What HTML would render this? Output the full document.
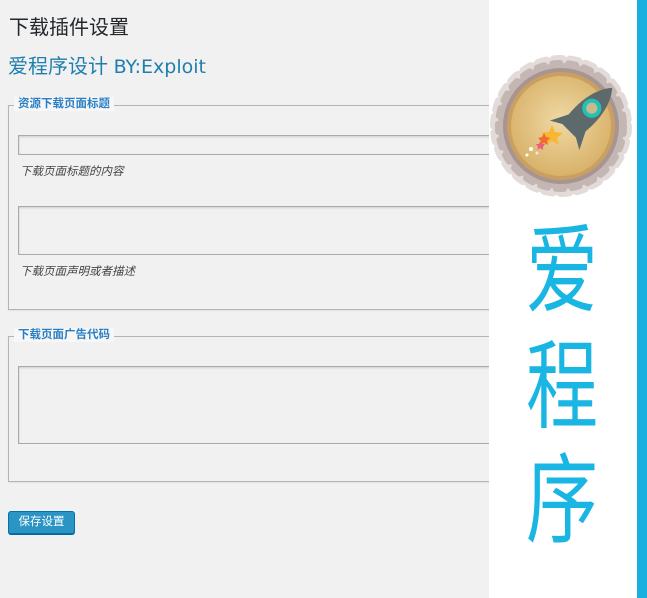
<!DOCTYPE html>
<html><head><meta charset="utf-8"><style>
*{box-sizing:border-box;margin:0;padding:0}
body{width:647px;height:598px;overflow:hidden;background:#f1f1f1;font-family:"Liberation Sans","Noto Sans CJK SC",sans-serif;position:relative}
.a{position:absolute}
h1{position:absolute;left:9px;top:11px;font-size:20px;font-weight:normal;color:#23282d}
h2{position:absolute;left:8px;top:50px;font-size:20px;font-weight:normal;color:#1e7fae}
.fs{position:absolute;left:8px;border:1px solid #b4b4b4;box-shadow:0 1px 1px rgba(0,0,0,.06)}
.lg{position:absolute;background:#f7f7f7;color:#2a7fc4;font-size:11.5px;font-weight:bold;padding:0 4px;height:14px;line-height:14px}
.in{position:absolute;left:18px;border:1px solid #aaa;box-shadow:inset 0 1px 2px rgba(0,0,0,.15);background:#f1f1f1}
.cap{position:absolute;left:20px;font-size:11.5px;font-style:italic;color:#444}
.panel{position:absolute;left:489px;top:0;width:148px;height:598px;background:#fff}
.bar{position:absolute;left:637px;top:0;width:10px;height:598px;background:#19b0e0}
.big{position:absolute;left:520px;width:84px;text-align:center;color:#19b5e3;font-size:72px;font-family:"Noto Sans CJK SC",sans-serif;font-weight:400;transform:scaleY(1.35);transform-origin:top;line-height:72px}
.btn{position:absolute;left:8px;top:511px;width:67px;height:23px;background:#2a95c5;border:1px solid #0073aa;border-radius:3px;color:#fff;font-size:11.5px;text-align:center;line-height:21px;box-shadow:0 1px 0 #006799}
</style></head><body>
<h1>下载插件设置</h1>
<h2>爱程序设计 <span style="font-family:'DejaVu Sans','Liberation Sans',sans-serif;font-size:19px">BY:Exploit</span></h2>

<div class="fs" style="top:105px;width:500px;height:205px"></div>
<div class="lg" style="left:14px;top:97px">资源下载页面标题</div>
<div class="in" style="top:135px;width:480px;height:20px"></div>
<div class="cap" style="top:163px">下载页面标题的内容</div>
<div class="in" style="top:206px;width:480px;height:49px"></div>
<div class="cap" style="top:263px">下载页面声明或者描述</div>

<div class="fs" style="top:336px;width:500px;height:146px"></div>
<div class="lg" style="left:14px;top:328px">下载页面广告代码</div>
<div class="in" style="top:366px;width:480px;height:78px"></div>

<div class="btn">保存设置</div>

<div class="panel"></div>
<div class="bar"></div>
<svg class="a" style="left:488px;top:53px" width="146" height="146" viewBox="0 0 146 146">
<defs>
<radialGradient id="g" cx="50%" cy="45%" r="55%"><stop offset="0" stop-color="#f0d9a4"/><stop offset="1" stop-color="#d8b26a"/></radialGradient>
</defs>
<g transform="translate(73,73)">
<circle r="66" fill="#e3dbd9" stroke="#e3dbd9" stroke-width="10" stroke-dasharray="8 8" stroke-linecap="round"/>
<circle r="63" fill="#c4b6b3" stroke="#c4b6b3" stroke-width="6" stroke-dasharray="8 8" stroke-linecap="round"/>
<circle r="58" fill="#a89592"/>
<circle r="54" fill="#c9a062"/>
<circle r="50" fill="url(#g)"/>
</g>
<g transform="translate(97,62) rotate(45) scale(1.6)">
<path d="M0-24 C9-14 9 4 6 14 L-6 14 C-9 4 -9-14 0-24Z" fill="#5d6a6b"/>
<path d="M-6 4 L-13 18 L-6 14Z M6 4 L13 18 L6 14Z" fill="#5d6a6b"/>
<circle cy="-6" r="6" fill="#21c2b4"/><circle cy="-6" r="3.5" fill="#c9b98f"/>
</g>
<polygon points="64,72 67,79 75,80 69,85 71,92 64,88 57,92 59,85 53,80 61,79" fill="#f7b733"/>
<polygon points="56,80 58,84 62,85 59,88 60,92 56,90 52,92 53,88 50,85 54,84" fill="#f26b2e"/>
<polygon points="52,88 54,91 57,91 55,94 55,97 52,95 49,97 50,94 48,91 51,91" fill="#e8607a"/>
<circle cx="43" cy="96" r="2" fill="#fff"/><circle cx="39" cy="102" r="1.5" fill="#fff"/><circle cx="49" cy="100" r="1.5" fill="#fde"/>
</svg>
<div class="big" style="top:214px">爱</div>
<div class="big" style="top:330px">程</div>
<div class="big" style="top:444px">序</div>
</body></html>
